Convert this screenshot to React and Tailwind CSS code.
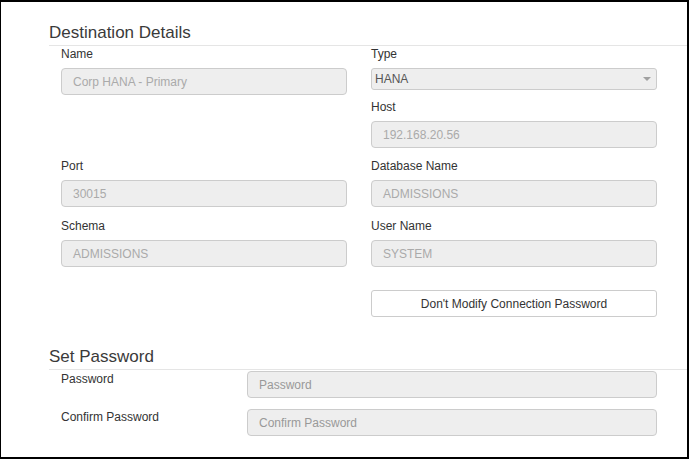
import React from 'react';

function Field({ label, value, className = '' }) {
  return (
    <div className={className}>
      <div className="text-[12px] leading-[17px] mb-[5px] text-[#333]">{label}</div>
      <div className="h-[27px] px-[11px] flex items-center bg-[#eee] border border-[#ccc] rounded-[4px] text-[12px] text-[#aaa]">
        {value}
      </div>
    </div>
  );
}

function SelectField({ label, value }) {
  return (
    <div>
      <div className="text-[12px] leading-[17px] mb-[5px] text-[#333]">{label}</div>
      <div className="h-[22px] pl-[3px] pr-[5px] flex items-center justify-between bg-[#eee] border border-[#ccc] rounded-[3px] text-[12px] text-[#555]">
        <span>{value}</span>
        <svg width="8" height="5" viewBox="0 0 8 5">
          <path d="M0 0 L8 0 L4 4 Z" fill="#a0a0a0" />
        </svg>
      </div>
    </div>
  );
}

function PasswordRow({ label, placeholder, className = '' }) {
  return (
    <div className={`flex items-start ${className}`}>
      <div className="w-[186px] text-[12px] leading-[17px] text-[#333]">{label}</div>
      <div className="w-[410px] h-[27px] px-[11px] flex items-center bg-[#eee] border border-[#ccc] rounded-[4px] text-[12px] text-[#999]">
        {placeholder}
      </div>
    </div>
  );
}

export default function App() {
  return (
    <div className="w-[689px] h-[459px] bg-white border-black border-l border-t-2 border-r-2 border-b-2 overflow-hidden font-['Liberation_Sans',Arial,sans-serif] text-[#333]">
      <h2 className="ml-[48px] mt-[21px] pb-[2px] border-b border-[#e5e5e5] text-[17px] leading-[20px] font-normal text-[#3a3a3a]">
        Destination Details
      </h2>

      <div className="ml-[60px] grid grid-cols-[286px_286px] gap-x-[24px]">
        <Field label="Name" value="Corp HANA - Primary" />
        <div>
          <SelectField label="Type" value="HANA" />
          <Field label="Host" value="192.168.20.56" className="mt-[9px]" />
        </div>

        <Field label="Port" value="30015" className="mt-[10px]" />
        <Field label="Database Name" value="ADMISSIONS" className="mt-[10px]" />

        <Field label="Schema" value="ADMISSIONS" className="mt-[11px]" />
        <Field label="User Name" value="SYSTEM" className="mt-[11px]" />

        <div />
        <button className="mt-[23px] h-[27px] bg-white border border-[#ccc] rounded-[3px] text-[12px] text-[#333]">
          Don't Modify Connection Password
        </button>
      </div>

      <h2 className="ml-[48px] mt-[30px] pb-[2px] border-b border-[#e5e5e5] text-[17px] leading-[20px] font-normal text-[#3a3a3a]">
        Set Password
      </h2>

      <div className="ml-[60px] pt-px">
        <PasswordRow label="Password" placeholder="Password" />
        <PasswordRow label="Confirm Password" placeholder="Confirm Password" className="mt-[11px]" />
      </div>
    </div>
  );
}
